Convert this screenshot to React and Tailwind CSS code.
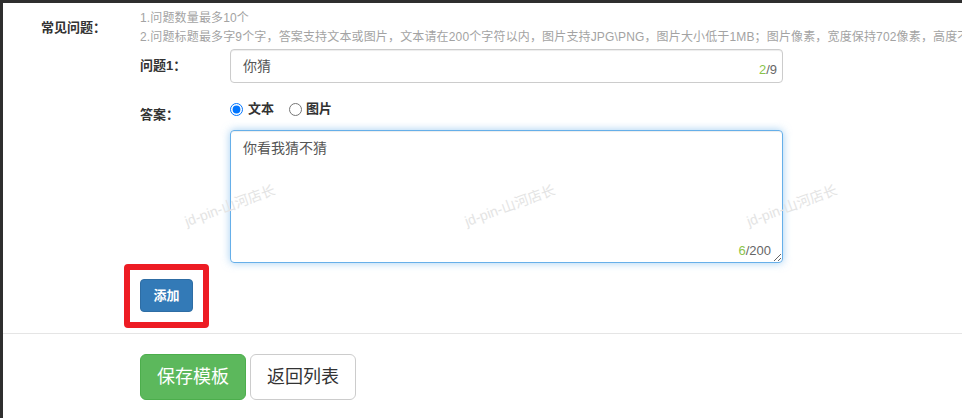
import React from "react";

const hint2 =
  "2.问题标题最多字9个字，答案支持文本或图片，文本请在200个字符以内，图片支持JPG\\PNG，图片大小低于1MB；图片像素，宽度保持702像素，高度不限";

export default function App() {
  return (
    <div className="relative w-[962px] h-[418px] overflow-hidden bg-white border-t-[3px] border-l-[3px] border-[#2f2f2f] font-['Liberation_Sans','Noto_Sans_CJK_SC',sans-serif] text-[#333]">
      {/* form body */}
      <div className="flex pl-[38px]">
        <div className="w-[99px] shrink-0 pt-[15px] text-[13px] leading-[20px] font-bold">常见问题：</div>
        <div className="flex-1 min-w-0">
          <div className="pt-[6px] text-[12px] leading-[19px] tracking-[0.15px] text-[#a3a3a3] whitespace-nowrap">
            <div>1.问题数量最多10个</div>
            <div>{hint2}</div>
          </div>

          {/* question */}
          <div className="flex items-center mt-[2px]">
            <div className="w-[90px] shrink-0 text-[13px] font-bold">问题1：</div>
            <div className="relative w-[553px] h-[34px] rounded-[4px] border border-[#ccc] shadow-[inset_0_1px_1px_rgba(0,0,0,0.075)] flex items-center px-[12px] text-[14px] text-[#555]">
              你猜
              <span className="absolute right-[5px] bottom-[6px] text-[13px] leading-none text-[#666]">
                <span className="text-[#8bc34a]">2</span>/9
              </span>
            </div>
          </div>

          {/* answer */}
          <div className="flex mt-[16px]">
            <div className="w-[90px] shrink-0 pt-[6px] text-[13px] leading-[20px] font-bold">答案：</div>
            <div className="flex items-center h-[20px] text-[13px] font-bold">
              <label className="flex items-center">
                <input type="radio" name="ans" defaultChecked className="w-[13px] h-[13px] m-0 accent-[#0075ff]" />
                <span className="ml-[5px]">文本</span>
              </label>
              <label className="flex items-center ml-[15px]">
                <input type="radio" name="ans" className="w-[13px] h-[13px] m-0" />
                <span className="ml-[4px]">图片</span>
              </label>
            </div>
          </div>

          <div className="relative mt-[5px] ml-[90px] w-[553px] h-[133px]">
            <textarea
              readOnly
              defaultValue="你看我猜不猜"
              className="block w-full h-full rounded-[4px] border border-[#66afe9] outline-none px-[12px] py-[7px] text-[14px] leading-[20px] text-[#555] shadow-[inset_0_1px_1px_rgba(0,0,0,0.075),0_0_8px_rgba(102,175,233,0.6)] resize-y"
            />
            <span className="absolute right-[12px] bottom-[6px] text-[13px] leading-none text-[#666]">
              <span className="text-[#8bc34a]">6</span>/200
            </span>
          </div>

          {/* add button with annotation */}
          <div className="relative mt-[16px] w-[53px] h-[33px]">
            <button className="w-full h-full rounded-[4px] bg-[#337ab7] border border-[#2e6da4] text-white text-[13px] font-bold">
              添加
            </button>
            <span className="pointer-events-none absolute -left-[16px] -top-[15px] -right-[16px] -bottom-[16px] border-[6px] border-[#ed1c24] rounded-[4px]" />
          </div>
        </div>
      </div>

      <div className="mt-[21px] border-t border-[#e5e5e5]" />

      <div className="flex gap-[4px] pl-[137px] mt-[20px]">
        <button className="w-[106px] h-[46px] rounded-[6px] bg-[#5cb85c] border border-[#4cae4c] text-white text-[18px]">
          保存模板
        </button>
        <button className="w-[106px] h-[46px] rounded-[6px] bg-white border border-[#ccc] text-[#333] text-[18px]">
          返回列表
        </button>
      </div>

      {/* watermarks */}
      {[227, 507, 789].map((x) => (
        <span
          key={x}
          className="pointer-events-none absolute top-[203px] -translate-x-1/2 -translate-y-1/2 -rotate-20 whitespace-nowrap text-[14px] text-[#e4e4e4]"
          style={{ left: x }}
        >
          jd-pin-山河店长
        </span>
      ))}
    </div>
  );
}
